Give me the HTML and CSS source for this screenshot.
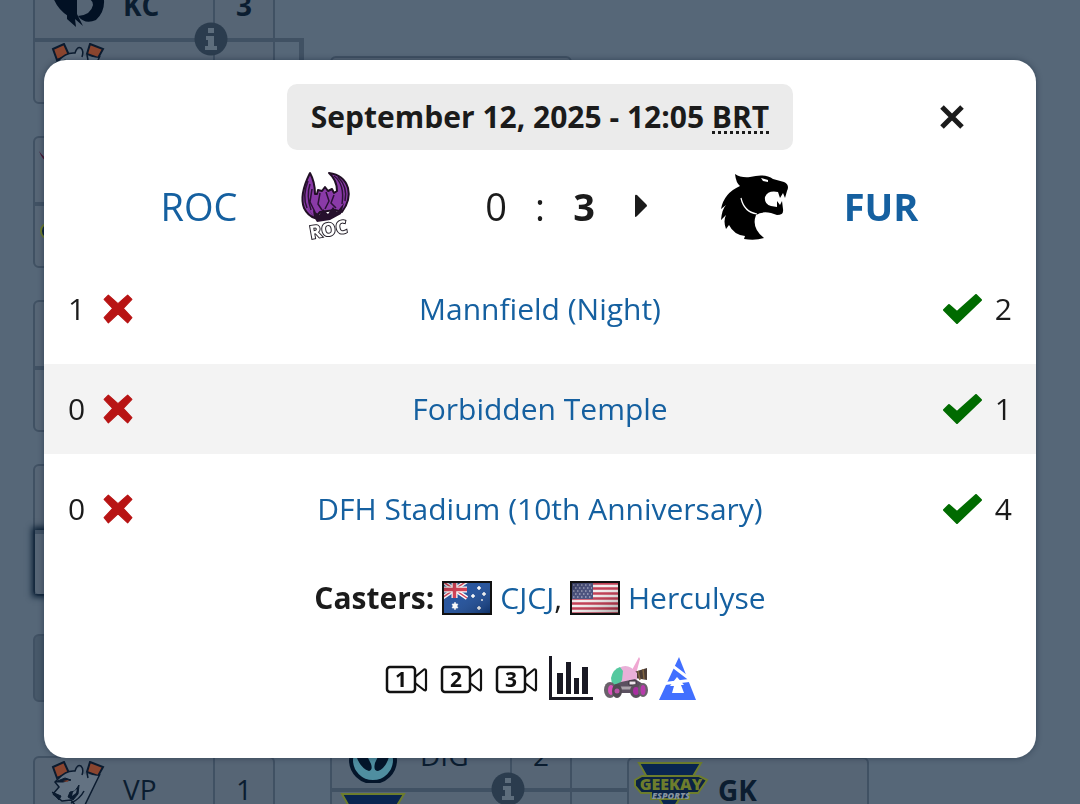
FILE: index.html
```
<!DOCTYPE html>
<html lang="en">
<head>
	<title>ROC vs FUR</title>
	<meta charset="utf-8"/>
	<meta name="viewport" content="width=device-width, initial-scale=1">
	<link rel="stylesheet" href="styles.css">
</head>
<body>
	<!-- shared shapes -->
	<svg class="defs" aria-hidden="true">
		<symbol id="info" viewBox="0 0 34 34">
			<circle cx="17" cy="17" r="16.500" fill="#2b3c4e"/>
			<path d="M14 6h6v5h-6zM12 14h8v10h3v4H11v-4h3v-6h-2z" fill="#5d6d7c"/>
		</symbol>
		<symbol id="cross" viewBox="0 0 28 28">
			<path d="M5 1L14 9L23 1L27 5L19 13.500L27 22L23 27L14 18.500L5 27L1 22L9 13.500L1 5Z" fill="#b81414" stroke="#b81414" stroke-linejoin="round"/>
		</symbol>
		<symbol id="check" viewBox="0 0 40 30">
			<path d="M2 16L7 11L15 18L34 1L39 6L15 29Z" fill="#006b00" stroke="#006b00" stroke-width="2" stroke-linejoin="round"/>
		</symbol>
		<symbol id="camera" viewBox="0 0 44 30">
			<rect x="3" y="2" width="28" height="25" rx="3" fill="none" stroke="#111" stroke-width="2.500"/>
			<path d="M31 12L40 4.500Q42 4 42 6V24Q42 26 40 25L31 18" fill="none" stroke="#111" stroke-width="2.200" stroke-linejoin="round"/>
		</symbol>
		<symbol id="bear" viewBox="0 0 56 56">
			<path d="M4 6L15 1L20 12L8 17Z" fill="#8a452f" stroke="#0b1b2f" stroke-width="2"/>
			<path d="M41 1L54 6L49 15L38 11Z" fill="#8a452f" stroke="#0b1b2f" stroke-width="2"/>
			<path d="M9 18Q17 9 26 10Q30 4 34 8V13L50 15L32 52L24 42L13 40L4 33L10 26L6 21Z" fill="#637282"/>
			<path d="M4 33L10 26L6 21L9 18Q17 9 26 10Q28 3 32 5Q35 8 33 14M38 12L39 17M51 13L32 52M4 33L13 40L22 39L26 44V50" fill="none" stroke="#0b1b2f" stroke-width="1.500"/>
			<path d="M3 31L12 35L10 39ZM6 21L16 17L22 19L14 21ZM30 24L29 33L24 39L19 36L21 31L26 30Z" fill="#0b1b2f" stroke="#0b1b2f"/>
			<path d="M14 20L20 19L18 21Z" fill="#8a452f"/>
			<path d="M24 31L28 28L27 32L23 35Z" fill="#637282"/>
			<path d="M22 42Q31 38 35 30" fill="none" stroke="#0b1b2f" stroke-width="1.500"/>
		</symbol>
		<symbol id="geekay" viewBox="0 0 76 56">
			<path d="M6 1H68L36 54Z" fill="#092550" stroke="#6d7d2d" stroke-width="2"/>
			<path d="M9 14H66L74 18L65 31H56V37H18V31H8L2 24V18Z" fill="#0b2244" stroke="#6d7d2d" stroke-width="2"/>
		</symbol>
	</svg>

	<div class="bracket" aria-hidden="true">
		<div class="round">
			<div class="match joined">
				<div class="row winner">
					<div class="team">
						<svg class="logo" viewBox="0 0 56 56">
							<path d="M1 4Q2 28 19 39V18Q13 12 12 4ZM18 0V42L27 50L26 42L34 49L28 37V0Z" fill="#021124"/>
							<path d="M28 2H45Q46 11 36 17H54Q58 33 47 43Q36 48 29 39Q42 38 44 28Q44 20 32 22L28 18Z" fill="#021124"/>
						</svg>
						KC
					</div>
					<div class="points">3</div>
				</div>
				<div class="row">
					<div class="team"><svg class="logo"><use href="#bear"/></svg></div>
					<div class="points"></div>
				</div>
				<svg class="info"><use href="#info"/></svg>
			</div>
			<div class="match">
				<div class="row">
					<div class="team left">
						<svg class="logo" viewBox="0 0 56 56"><path d="M4 10Q12 22 28 22V27Q10 26 4 10Z" fill="#481632"/></svg>
					</div>
					<div class="points"></div>
				</div>
				<div class="row">
					<div class="team left">
						<svg class="logo" viewBox="0 0 56 56"><circle cx="14" cy="24" r="8" fill="#0b2244" stroke="#6d7d2d" stroke-width="2"/></svg>
					</div>
					<div class="points"></div>
				</div>
			</div>
			<div class="match">
				<div class="row"><div class="team"></div><div class="points"></div></div>
				<div class="row"><div class="team"></div><div class="points"></div></div>
			</div>
			<div class="match">
				<div class="row"><div class="team"></div><div class="points"></div></div>
				<div class="row hovered"><div class="team"></div><div class="points"></div></div>
			</div>
			<div class="round-title"></div>
			<div class="match">
				<div class="row">
					<div class="team"><svg class="logo"><use href="#bear"/></svg>VP</div>
					<div class="points">1</div>
				</div>
				<div class="row"><div class="team"></div><div class="points"></div></div>
			</div>
		</div>
		<div class="round second">
			<div class="match"></div>
			<div class="match straight">
				<div class="row">
					<div class="team">
						<svg class="logo" viewBox="0 0 56 56">
							<circle cx="27" cy="33" r="22" fill="#4f8ea0" stroke="#04152a" stroke-width="4"/>
							<path d="M8 19Q20 24 25 37Q27 43 23 44Q11 40 8 19ZM45 19Q43 40 32 44Q27 44 29 36Q33 24 45 19Z" fill="#04152a"/>
						</svg>
						DIG
					</div>
					<div class="points">2</div>
				</div>
				<div class="row">
					<div class="team"><svg class="logo wide"><use href="#geekay"/></svg></div>
					<div class="points"></div>
				</div>
				<svg class="info"><use href="#info"/></svg>
			</div>
		</div>
		<div class="round third">
			<div class="match">
				<div class="row winner">
					<div class="team">
						<svg class="logo wide" viewBox="0 0 76 56">
							<use href="#geekay"/>
							<text x="38" y="28" class="geekay-name">GEEKAY</text>
							<text x="38" y="37" class="geekay-sub">ESPORTS</text>
						</svg>
						GK
					</div>
				</div>
				<div class="row"></div>
			</div>
		</div>
	</div>

	<div class="overlay">
		<div class="popup" role="dialog" aria-label="Match details">
			<div class="popup-top">
				<div class="date">September 12, 2025 - 12:05 <abbr title="Brasilia Time">BRT</abbr></div>
				<button type="button" class="close" aria-label="Close">
					<svg viewBox="0 0 26 26"><path d="M3 3L23 23M23 3L3 23" fill="none" stroke="#1b1b1b" stroke-width="5"/></svg>
				</button>
			</div>

			<div class="versus">
				<a href="#roc">ROC</a>
				<svg class="crest" viewBox="-10 1 90 90" role="img" aria-label="ROC">
					<path d="M20 13Q9 35 14 48Q18 56 25 58L30 52L45 50L52 52Q61 40 58 28Q54 15 39 13Q47 20 47 31L44 33L42 29L38 31L35 27L32 31L28 30L27 34H25Q25 22 20 13Z" fill="#8a3aa8" stroke="#211025" stroke-width="2" stroke-linejoin="round"/>
					<path d="M18 21Q12 36 17 48M20 24Q16 36 21 50M22 29L20 42L25 52M30 33L28 44L32 50M36 32L39 41L35 49M44 35L41 43L46 48M44 16Q55 24 52 44M48 17Q58 27 55 41" fill="none" stroke="#2c1236" stroke-width="1.500"/>
					<path d="M16 45L24 58L23 50L29 55L33 49L38 54L43 47L47 52L54 43L51 54L40 60L27 62Z" fill="#26102d"/>
					<text x="38" y="76" class="roc-name" transform="rotate(-10 37 68)">ROC</text>
				</svg>
				<div class="score">
					<span></span>
					<span>0</span>
					<span>:</span>
					<b>3</b>
					<svg viewBox="0 0 14 24" role="img" aria-label="Winner"><path d="M1 2V22Q1 24 3 22L12 13Q14 12 12 10L3 1Q1 0 1 2Z" fill="#1b1b1b"/></svg>
				</div>
				<svg class="crest" viewBox="0 1 90 90" role="img" aria-label="FUR">
					<path d="M25 14Q31 18 40 17Q55 13 63 19L74 22Q80 25 77 31L75 38L73 33L70 38L68 32Q58 30 55 37Q54 44 61 46L67 47V41L70 45L72 41L73 49Q74 55 67 55L61 53Q52 51 46 55Q41 68 54 78Q45 81 34 79L35 76Q24 75 19 65L16 69Q13 61 16 55L11 60Q12 49 16 45L11 49Q14 33 30 26Q26 23 25 14Z"/>
					<path d="M31 38Q34 52 47 54" fill="none" stroke="#fff" stroke-width="1.200"/>
					<path d="M51 18L58 20V22L53 21Z" fill="#fff"/>
				</svg>
				<a href="#fur"><b>FUR</b></a>
			</div>

			<div class="maps">
				<div class="map">
					<div class="side"><span>1</span><svg role="img" aria-label="Loss"><use href="#cross"/></svg></div>
					<a href="#mannfield">Mannfield (Night)</a>
					<div class="side"><svg role="img" aria-label="Win"><use href="#check"/></svg><span>2</span></div>
				</div>
				<div class="map">
					<div class="side"><span>0</span><svg role="img" aria-label="Loss"><use href="#cross"/></svg></div>
					<a href="#temple">Forbidden Temple</a>
					<div class="side"><svg role="img" aria-label="Win"><use href="#check"/></svg><span>1</span></div>
				</div>
				<div class="map">
					<div class="side"><span>0</span><svg role="img" aria-label="Loss"><use href="#cross"/></svg></div>
					<a href="#stadium">DFH Stadium (10th Anniversary)</a>
					<div class="side"><svg role="img" aria-label="Win"><use href="#check"/></svg><span>4</span></div>
				</div>
			</div>

			<div class="casters">
				<b>Casters:</b>
				<svg class="flag" viewBox="0 0 50 34" role="img" aria-label="Australia">
					<defs>
						<linearGradient id="shade" x1="0" y1="0" x2="1" y2="1">
							<stop offset="0" stop-color="#000" stop-opacity=".35"/>
							<stop offset=".4" stop-color="#fff" stop-opacity=".12"/>
							<stop offset="1" stop-color="#000" stop-opacity=".35"/>
						</linearGradient>
					</defs>
					<rect width="50" height="34" fill="#0b3f92"/>
					<path d="M0 0L25 17M25 0L0 17" stroke="#fff" stroke-width="4"/>
					<path d="M0 0L25 17M25 0L0 17" stroke="#d22840" stroke-width="1.500"/>
					<path d="M12.500 0V17M0 8.500H25" stroke="#fff" stroke-width="6"/>
					<path d="M12.500 0V17M0 8.500H25" stroke="#d22840" stroke-width="3.500"/>
					<path d="M13 21L14 23L16 23L15 25L16 27L14 27L13 29L12 27L10 27L11 25L10 23L12 23ZM37 5l1 1 1 1-1 1-1 1-1-1-1-1 1-1ZM31 13l1 1 1 1-1 1-1 1-1-1-1-1 1-1ZM42 11l1 1 1 1-1 1-1 1-1-1-1-1 1-1ZM37 25l1 1 1 1-1 1-1 1-1-1-1-1 1-1ZM40 18l1 1-1 1-1-1Z" fill="#fff" stroke="#fff" stroke-width=".5"/>
					<rect width="50" height="34" fill="url(#shade)"/>
					<rect x="1" y="1" width="48" height="32" fill="none" stroke="#111" stroke-width="2"/>
				</svg>
				<span><a href="#cjcj">CJCJ</a>,</span>
				<svg class="flag" viewBox="0 0 50 34" role="img" aria-label="United States">
					<rect width="50" height="34" fill="#f3eded"/>
					<path d="M0 2.500H50M0 7.500H50M0 12.500H50M0 17.500H50M0 22.500H50M0 27.500H50M0 32.500H50" stroke="#bd2740" stroke-width="2.500"/>
					<rect width="23" height="18" fill="#343c6f"/>
					<path d="M3 4H22M5 7H22M3 10H22M5 13H22M3 16H22" stroke="#c5c8dc" stroke-width="1.200" stroke-dasharray="1.500 2.500"/>
					<rect width="50" height="34" fill="url(#shade)"/>
					<rect x="1" y="1" width="48" height="32" fill="none" stroke="#111" stroke-width="2"/>
				</svg>
				<a href="#herculyse">Herculyse</a>
			</div>

			<div class="links">
				<a href="#game1" aria-label="Watch game 1"><svg viewBox="0 1 44 30"><use href="#camera" y="2" width="44" height="30"/><text x="17" y="24">1</text></svg></a>
				<a href="#game2" aria-label="Watch game 2"><svg viewBox="0 1 44 30"><use href="#camera" y="2" width="44" height="30"/><text x="17" y="24">2</text></svg></a>
				<a href="#game3" aria-label="Watch game 3"><svg viewBox="0 1 44 30"><use href="#camera" y="2" width="44" height="30"/><text x="17" y="24">3</text></svg></a>
				<a href="#stats" aria-label="Statistics">
					<svg viewBox="0 0 44 46"><path d="M0 0H3V41H44V44H0ZM8 17H14V38H8ZM17 6H22V38H17ZM25 22H30V38H25ZM33 11H39V38H33Z" fill="#191923"/></svg>
				</a>
				<a href="#ballchasing" aria-label="Ballchasing">
					<svg viewBox="0 0 44 46">
						<path d="M28 14L35 1L36 3L32 18Z" fill="#f0a7d2"/>
						<path d="M30 16L43 12V24L31 22Z" fill="#4a3b35"/>
						<path d="M34 15L36 24M39 13L40 23" stroke="#806541" stroke-width="1.500"/>
						<path d="M12 31L15 12Q24 6 33 17V28L30 32Z" fill="#e9b0d8"/>
						<path d="M7 22Q9 13 16 11L19 15L18 24L14 31L8 28Z" fill="#55c99f"/>
						<path d="M5 31L17 26L31 23L39 28L40 33L30 37H13Z" fill="#5b5060"/>
						<path d="M25 25H32V29H25Z" fill="#ece5eb" stroke="#382f39"/>
						<path d="M16 32H29" stroke="#aaa2aa" stroke-width="3"/>
						<ellipse cx="6" cy="34" rx="6" ry="8" fill="#69616a"/>
						<ellipse cx="7" cy="34" rx="3" ry="5" fill="#dc51bd"/>
						<ellipse cx="13" cy="35" rx="5" ry="7" fill="#514a53"/>
						<circle cx="13" cy="35" r="2.500" fill="#ba54a7"/>
						<ellipse cx="32" cy="35" rx="6" ry="7" fill="#59505b"/>
						<ellipse cx="32" cy="35" rx="3" ry="4" fill="#a92ea1"/>
						<ellipse cx="39" cy="34" rx="5" ry="7" fill="#69616a"/>
						<ellipse cx="39" cy="34" rx="2.500" ry="5" fill="#b73cab"/>
					</svg>
				</a>
				<a href="#blast" aria-label="BLAST" class="blast">
					<svg viewBox="0 0 37 46">
						<path d="M20 1L37 44H0Z" fill="#416fff"/>
						<path d="M11 8L32 24M2 28L34 24" stroke="#fff" stroke-width="3"/>
						<path d="M18 21L25 29H22L25 37H13L15 30H11Z" fill="#fff"/>
					</svg>
				</a>
			</div>
		</div>
	</div>
</body>
</html>
```
FILE: styles.css
```
*, *::after{
	box-sizing: border-box;
}
body{
	margin: 0;
	height: 100vh;
	overflow: hidden;
	background-color: #566778;
	color: #1b1b1b;
	font-family: "Open Sans", "Noto Sans", sans-serif;
	font-size: 30px;
	line-height: 40px;
}
a{
	color: #1560a0;
	text-decoration: none;
}
svg{
	display: block;
	flex: none;
}
.defs{
	position: absolute;
	width: 0;
	height: 0;
}

/* bracket behind the popup */
.bracket{
	display: flex;
	gap: 55px;
	height: 100vh;
	padding-left: 33px;
	overflow: hidden;
	color: #0b1d30;
	font-size: 28px;
}
.round{
	flex: none;
	width: 242px;
	margin-top: -28px;
}
.round.second{
	margin-top: 56px;
}
.round.third{
	margin-top: 757px;
}
.match{
	position: relative;
	height: 132px;
	margin-bottom: 32px;
	border: 2px solid #405163;
	border-radius: 6px;
	background-color: #566575;
}
.round.second .match:first-child{
	margin-bottom: 534px;
}
.row{
	display: flex;
	height: 64px;
}
.row + .row{
	border-top: 4px solid #405163;
}
.winner{
	font-weight: bold;
}
.hovered{
	box-shadow: 0 0 6px 3px #0b2036;
}
.team{
	display: flex;
	flex: 1;
	align-items: center;
	gap: 18px;
	padding: 0 0 2px 14px;
}
.team.left{
	padding-left: 0;
}
.points{
	display: flex;
	align-items: center;
	justify-content: center;
	width: 60px;
	padding-bottom: 2px;
	border-left: 2px solid #405163;
}
.logo{
	width: 56px;
	height: 56px;
}
.logo.wide{
	width: 76px;
	margin: 0 -9px 0 -10px;
}
.info{
	position: absolute;
	top: 48px;
	left: 159px;
	width: 34px;
	height: 34px;
}
.joined::after{
	content: "";
	position: absolute;
	top: 64px;
	left: 240px;
	width: 29px;
	height: 90px;
	border-top: 4px solid #405163;
	border-right: 5px solid #405163;
}
.straight::after{
	content: "";
	position: absolute;
	top: 64px;
	left: 240px;
	width: 56px;
	height: 4px;
	background-color: #405163;
}
.round-title{
	height: 68px;
	margin: 38px 0 54px;
	border: 2px solid #405163;
	border-radius: 6px;
	background-color: #475869;
}
.geekay-name{
	fill: #6d7d2d;
	font-size: 16px;
	font-weight: 800;
	text-anchor: middle;
}
.geekay-sub{
	fill: #8593a0;
	font-size: 9px;
	font-weight: 800;
	font-style: italic;
	text-anchor: middle;
}

/* popup */
.overlay{
	position: fixed;
	top: 0;
	left: 0;
	right: 0;
	padding: 60px 44px;
}
.popup{
	padding: 24px 0 56px;
	border-radius: 22px;
	background-color: #fff;
	box-shadow: 0 0 6px rgba(0,20,40,.4);
}
.popup-top{
	position: relative;
	display: flex;
	justify-content: center;
}
.date{
	padding: 13px 24px;
	border-radius: 10px;
	background-color: #ebebeb;
	font-weight: bold;
}
.date abbr{
	display: inline-block;
	text-decoration: none;
	line-height: 28px;
	border-bottom: 3px dotted #1b1b1b;
}
.close{
	position: absolute;
	top: 12px;
	right: 63px;
	padding: 8px;
	border: 0;
	background: none;
	cursor: pointer;
}
.close svg{
	width: 26px;
	height: 26px;
}
.versus{
	display: grid;
	grid-template-columns: 160px 92px 338px 92px 160px;
	justify-content: center;
	align-items: center;
	justify-items: center;
	height: 112px;
	font-size: 38px;
}
.crest{
	width: 90px;
	height: 90px;
}
.roc-name{
	fill: #fff;
	stroke: #25202a;
	stroke-width: 2px;
	paint-order: stroke;
	font-size: 18px;
	font-weight: bold;
	text-anchor: middle;
}
.score{
	display: grid;
	grid-template-columns: 70px 44px 44px 44px 70px;
	align-items: center;
	justify-items: center;
}
.score svg{
	width: 14px;
	height: 24px;
}
.maps{
	display: flex;
	flex-direction: column;
	gap: 10px;
	margin-top: 2px;
}
.map{
	display: flex;
	align-items: center;
	justify-content: space-between;
	min-height: 90px;
	padding: 0 24px;
}
.map:nth-child(even){
	background-color: #f3f3f3;
}
.side{
	display: flex;
	align-items: center;
	gap: 13px;
}
.side svg{
	width: 40px;
	height: 30px;
}
.casters{
	display: flex;
	align-items: center;
	justify-content: center;
	gap: 8px;
	margin-top: 24px;
}
.flag{
	width: 50px;
	height: 34px;
}
.links{
	display: flex;
	align-items: center;
	justify-content: center;
	gap: 11px;
	margin-top: 38px;
}
.links svg{
	width: 44px;
	height: 46px;
}
.links .blast svg{
	width: 37px;
}
.links text{
	fill: #111;
	font-size: 21px;
	font-weight: bold;
	text-anchor: middle;
}
```
